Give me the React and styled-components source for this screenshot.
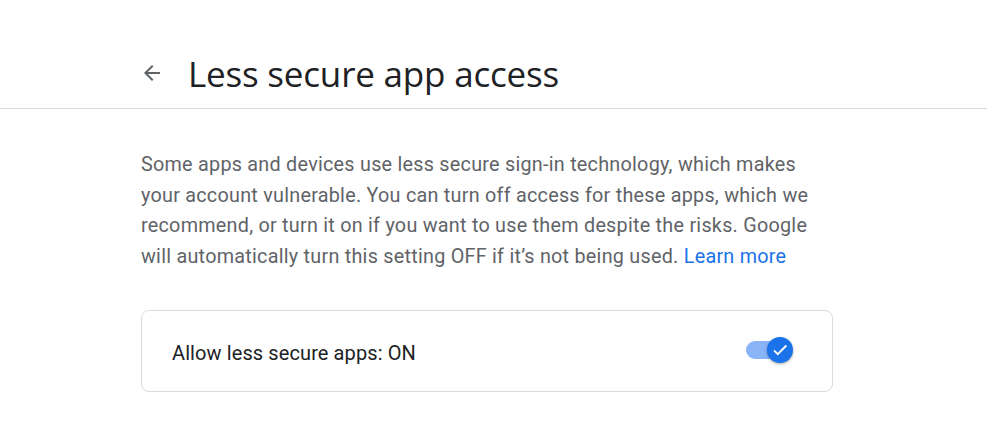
import React from "react"
import styled, { createGlobalStyle } from "styled-components"

const GlobalStyle = createGlobalStyle`
  body {
    margin: 0;
    background: #fff;
    font-family: Roboto, "Liberation Sans", Arial, sans-serif;
  }
`

const App = () => {
  return (
    <>
      <GlobalStyle />
      <Header>
        <HeaderInner>
          <BackButton aria-label="Back">
            <svg width="24" height="24" viewBox="0 0 24 24">
              <path
                d="M20 11H7.83l5.59-5.59L12 4l-8 8 8 8 1.41-1.41L7.83 13H20v-2z"
                fill="#5f6368"
              />
            </svg>
          </BackButton>
          <Title>Less secure app access</Title>
        </HeaderInner>
      </Header>
      <Main>
        <Description>
          Some apps and devices use less secure sign-in technology, which makes
          your account vulnerable. You can turn off access for these apps, which we
          recommend, or turn it on if you want to use them despite the risks. Google
          will automatically turn this setting OFF if it’s not being used.{" "}
          <LearnMore href="#">Learn more</LearnMore>
        </Description>
        <Card>
          <CardLabel>Allow less secure apps: ON</CardLabel>
          <Toggle>
            <Track />
            <Thumb>
              <svg width="18" height="18" viewBox="0 0 24 24">
                <path
                  d="M4 12.5l5 5L20.5 6"
                  fill="none"
                  stroke="#fff"
                  strokeWidth="2.6"
                />
              </svg>
            </Thumb>
          </Toggle>
        </Card>
      </Main>
    </>
  )
}

export default App

const Header = styled.header`
  border-bottom: 1px solid #dadce0;
  height: 109px;
  display: flex;
  align-items: center;
  box-sizing: border-box;
  padding-top: 38px;
`

const HeaderInner = styled.div`
  display: flex;
  align-items: center;
  margin-left: 140px;
  gap: 24px;
`

const BackButton = styled.button`
  border: none;
  background: none;
  padding: 0;
  width: 24px;
  height: 24px;
  display: flex;
  cursor: pointer;
`

const Title = styled.h1`
  margin: 0;
  font-family: "Open Sans", Roboto, sans-serif;
  font-weight: 400;
  font-size: 35px;
  color: #202124;
  letter-spacing: -0.2px;
`

const Main = styled.main`
  margin-left: 141px;
  width: 692px;
  padding-top: 41px;
`

const Description = styled.p`
  margin: 0;
  font-size: 19.8px;
  line-height: 30.5px;
  letter-spacing: 0.25px;
  color: #5f6368;
`

const LearnMore = styled.a`
  color: #1a73e8;
  text-decoration: none;
`

const Card = styled.div`
  margin-top: 38px;
  border: 1px solid #dadce0;
  border-radius: 8px;
  height: 82px;
  box-sizing: border-box;
  display: flex;
  align-items: center;
  justify-content: space-between;
  padding: 4px 40px 0 30px;
`

const CardLabel = styled.span`
  font-size: 20px;
  letter-spacing: 0.1px;
  color: #202124;
`

const Toggle = styled.div`
  position: relative;
  width: 46px;
  height: 24px;
  display: flex;
  align-items: center;
  margin-top: -6px;
`

const Track = styled.div`
  width: 40px;
  height: 18px;
  border-radius: 9px;
  background: #8ab4f8;
`

const Thumb = styled.div`
  position: absolute;
  right: -1px;
  top: -1px;
  width: 26px;
  height: 26px;
  border-radius: 50%;
  background: #1a73e8;
  box-shadow: 0 1px 3px rgba(0, 0, 0, 0.35);
  display: flex;
  align-items: center;
  justify-content: center;
`
